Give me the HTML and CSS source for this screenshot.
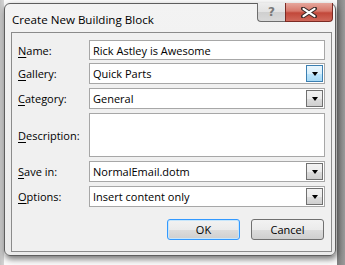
FILE: index.html
```html
<!DOCTYPE html>
<html>
<head>
<meta charset="utf-8">
<link rel="stylesheet" href="styles.css">
</head>
<body>
<div class="window">
  <div class="titlebar">
    <span class="title">Create New Building Block</span>
    <div class="caption-buttons">
      <div class="cbtn help">?</div>
      <div class="cbtn close"><svg width="16" height="11" viewBox="0 0 16 11"><path d="M2 1.5 L14 9.5 M14 1.5 L2 9.5" stroke="#3b2a28" stroke-width="4" stroke-linecap="round"/><path d="M2.5 1.8 L13.5 9.2 M13.5 1.8 L2.5 9.2" stroke="#ffffff" stroke-width="2.2" stroke-linecap="round"/></svg></div>
    </div>
  </div>
  <div class="client">
    <div class="row r-name">
      <label class="lbl"><u>N</u>ame:</label>
      <div class="field text">Rick Astley is Awesome</div>
    </div>
    <div class="row">
      <label class="lbl"><u>G</u>allery:</label>
      <div class="field combo">Quick Parts<span class="drop hot"><i class="arrow"></i></span></div>
    </div>
    <div class="row">
      <label class="lbl"><u>C</u>ategory:</label>
      <div class="field combo">General<span class="drop"><i class="arrow"></i></span></div>
    </div>
    <div class="row r-desc">
      <label class="lbl"><u>D</u>escription:</label>
      <div class="field text area"></div>
    </div>
    <div class="row">
      <label class="lbl"><u>S</u>ave in:</label>
      <div class="field combo">NormalEmail.dotm<span class="drop"><i class="arrow"></i></span></div>
    </div>
    <div class="row">
      <label class="lbl"><u>O</u>ptions:</label>
      <div class="field combo">Insert content only<span class="drop"><i class="arrow"></i></span></div>
    </div>
    <div class="buttons">
      <button class="btn default">OK</button>
      <button class="btn">Cancel</button>
    </div>
  </div>
</div>
</body>
</html>
```

FILE: styles.css
```css
html, body {
  margin: 0;
  padding: 0;
}
body {
  width: 345px;
  height: 265px;
  overflow: hidden;
  background:
    linear-gradient(to right, #c4c4c4 0, #d6d6d6 4px, #fbfbfb 4px, #fbfbfb 337px, #7d7d7d 337px, #9a9a9a 345px);
  font-family: "Open Sans", "Noto Sans", sans-serif;
  font-size: 11px;
  color: #000;
  padding: 3px 0 0 4px;
  box-sizing: border-box;
}
.window {
  width: 332px;
  height: 253px;
  box-sizing: border-box;
  border: 1px solid #5e5e5e;
  border-radius: 6px;
  background: linear-gradient(#f3f3f3, #ebebeb);
  box-shadow: 1px 3px 6px rgba(0,0,0,0.55);
  padding: 0 3px 3px 6px;
  display: flex;
  flex-direction: column;
}
.titlebar {
  height: 28px;
  display: flex;
  justify-content: space-between;
  align-items: flex-start;
}
.title {
  font-size: 11.6px;
  margin-top: 8px;
  margin-left: 1px;
}
.caption-buttons {
  display: flex;
  margin-top: -1px;
  margin-right: -1px;
}
.cbtn {
  height: 19px;
  box-sizing: border-box;
  display: flex;
  align-items: center;
  justify-content: center;
  border: 1px solid #6d6d6d;
  border-top: none;
}
.help {
  width: 28px;
  border-radius: 0 0 0 4px;
  background: linear-gradient(#ededed 0, #e2e2e2 50%, #cfcfcf 51%, #d9d9d9 100%);
  color: #7a7a7a;
  font-family: "DejaVu Sans", sans-serif;
  font-weight: bold;
  font-size: 12px;
  border-right: none;
}
.close {
  width: 48px;
  border-color: #7b2a23;
  border-radius: 0 0 4px 0;
  background: linear-gradient(#e6a79d 0, #d7786b 45%, #c2483a 55%, #d0685a 100%);
}
.client {
  flex: 1;
  border: 1px solid #8b8b8b;
  background: #f0f0f0;
  padding: 7px 6px 0 6px;
  display: flex;
  flex-direction: column;
}
.row {
  display: flex;
  align-items: center;
  height: 21px;
  margin-bottom: 4px;
}
.row.r-name {
  height: 20px;
  margin-bottom: 3px;
}
.row.r-desc {
  height: 44px;
  align-items: center;
}
.lbl {
  width: 71px;
  flex: none;
}
.lbl u {
  text-decoration-thickness: 1px;
  text-underline-offset: 2px;
}
.field {
  flex: 1;
  height: 100%;
  box-sizing: border-box;
  border: 1px solid #a7a7a7;
  background: #fff;
  display: flex;
  align-items: center;
  padding-left: 3px;
  position: relative;
}
.drop {
  position: absolute;
  right: 1px;
  top: 1px;
  bottom: 1px;
  width: 17px;
  box-sizing: border-box;
  border: 1px solid #707070;
  background: linear-gradient(#f2f2f2 0, #ebebeb 50%, #dddddd 51%, #cfcfcf 100%);
  display: flex;
  align-items: center;
  justify-content: center;
}
.drop.hot {
  border-color: #3c7fb1;
  background: linear-gradient(#eaf6fd 0, #d9f0fc 50%, #bee6fd 51%, #a7d9f5 100%);
}
.arrow {
  width: 0;
  height: 0;
  border-left: 3.5px solid transparent;
  border-right: 3.5px solid transparent;
  border-top: 4px solid #000;
  margin-top: 1px;
}
.buttons {
  display: flex;
  justify-content: flex-end;
  gap: 11px;
  margin-top: 8px;
  margin-right: 1px;
}
.btn {
  width: 73px;
  height: 21px;
  border: 1px solid #707070;
  border-radius: 3px;
  background: linear-gradient(#f2f2f2 0, #ebebeb 50%, #dddddd 51%, #cfcfcf 100%);
  font-family: inherit;
  font-size: 11px;
  color: #000;
  padding: 0;
}
.btn.default {
  border-color: #3399ff;
  box-shadow: inset 0 0 0 1px #c7e6fb;
}
```
